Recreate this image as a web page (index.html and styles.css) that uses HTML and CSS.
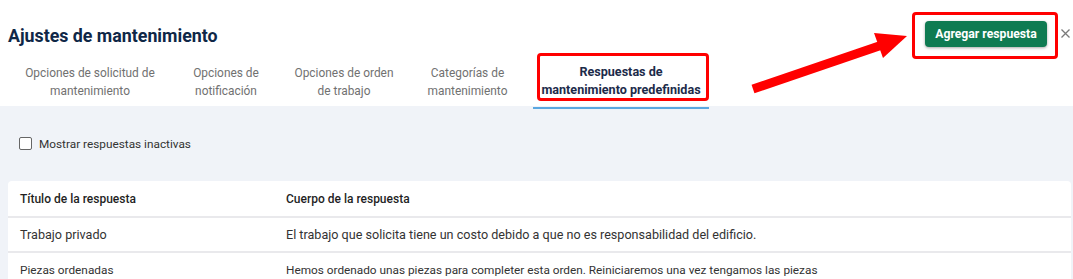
FILE: index.html
```html
<!DOCTYPE html>
<html lang="es">
<head>
    <meta charset="UTF-8">
    <meta name="viewport" content="width=device-width, initial-scale=1.0">
    <title>Ajustes de mantenimiento</title>
    <link rel="stylesheet" href="styles.css">
</head>
<body>
    <div class="header">
        <div class="title-row">
            <h1 class="title">Ajustes de mantenimiento</h1>
            <div class="actions">
                <div class="btn-wrap">
                    <button class="btn-primary">Agregar respuesta</button>
                    <div class="mark mark-btn"></div>
                </div>
                <svg class="close" width="9" height="9" viewBox="0 0 9 9">
                    <path d="M0.5 0.5 L8.5 8.5 M8.5 0.5 L0.5 8.5" stroke="#7a7a7a" stroke-width="1.3"/>
                </svg>
            </div>
        </div>
        <div class="tabs">
            <div class="tab tab-1">Opciones de solicitud de<br>mantenimiento</div>
            <div class="tab tab-2">Opciones de<br>notificación</div>
            <div class="tab tab-3">Opciones de orden<br>de trabajo</div>
            <div class="tab tab-4">Categorías de<br>mantenimiento</div>
            <div class="tab tab-5 active">
                Respuestas de<br>mantenimiento predefinidas
                <div class="mark mark-tab"></div>
            </div>
        </div>
    </div>

    <div class="content">
        <label class="check">
            <span class="box"></span>
            Mostrar respuestas inactivas
        </label>

        <div class="table">
            <div class="row head">
                <div class="col-title">Título de la respuesta</div>
                <div class="col-body">Cuerpo de la respuesta</div>
            </div>
            <div class="row">
                <div class="col-title">Trabajo privado</div>
                <div class="col-body">El trabajo que solicita tiene un costo debido a que no es responsabilidad del edificio.</div>
            </div>
            <div class="row row-sm">
                <div class="col-title">Piezas ordenadas</div>
                <div class="col-body">Hemos ordenado unas piezas para completer esta orden. Reiniciaremos una vez tengamos las piezas</div>
            </div>
        </div>
    </div>

    <!-- flecha de anotación -->
    <svg class="arrow" width="1073" height="120" viewBox="0 0 1073 120">
        <line x1="753" y1="89" x2="882" y2="45" stroke="#f00" stroke-width="9"/>
        <polygon points="907,36 874,33 883,58" fill="#f00"/>
    </svg>
</body>
</html>
```

FILE: styles.css
```css
*{
    margin: 0;
    padding: 0;
    box-sizing: border-box;
}
body{
    width: 1073px;
    height: 279px;
    overflow: hidden;
    position: relative;
    font-family: Roboto, "Liberation Sans", sans-serif;
    background-color: #f0f3f8;
    color: #333;
}
.header{
    background-color: #fff;
    height: 106px;
}
.title-row{
    display: flex;
    justify-content: space-between;
    align-items: center;
    padding: 21px 3px 0 8px;
    height: 47px;
}
.title{
    font-size: 17.8px;
    font-weight: 700;
    color: #0f2747;
    margin-top: 2px;
}
.actions{
    display: flex;
    align-items: center;
    gap: 14px;
}
.btn-wrap{
    position: relative;
}
.btn-primary{
    display: block;
    width: 122px;
    height: 26px;
    border: none;
    border-radius: 4px;
    background-color: #0f7b52;
    color: #fff;
    font-family: Roboto, "Liberation Sans", sans-serif;
    font-size: 12.2px;
    font-weight: 700;
    box-shadow: 0 1px 3px rgba(0,0,0,0.35);
}
.close{
    display: block;
    margin-top: -1px;
}
/* cajas rojas de anotación */
.mark{
    position: absolute;
    border: 3px solid #f00;
    border-radius: 4px;
}
.mark-btn{
    left: -13px;
    top: -9px;
    width: 146px;
    height: 47px;
}
.tabs{
    display: flex;
    padding-left: 14px;
    margin-top: 16px;
}
.tab{
    position: relative;
    text-align: center;
    font-size: 11.9px;
    line-height: 18px;
    color: #717171;
    height: 45px;
    padding-top: 1px;
}
.tab-1{ width: 152px; }
.tab-2{ width: 120px; }
.tab-3{ width: 116px; }
.tab-4{ width: 131px; }
.tab-5{ width: 176px; }
.tab.active{
    color: #1c2b4a;
    font-size: 12.6px;
    font-weight: 700;
    border-bottom: 2px solid #5aa7e0;
    height: 46px;
    padding-top: 0;
}
.mark-tab{
    left: 4px;
    top: -10px;
    width: 172px;
    height: 48px;
}
.content{
    padding: 31px 2px 0 8px;
}
.check{
    display: flex;
    align-items: center;
    gap: 7px;
    padding-left: 11px;
    font-size: 11.8px;
    color: #333;
    height: 13px;
}
.box{
    width: 13px;
    height: 13px;
    border: 1px solid #666;
    border-radius: 2px;
    background-color: #fff;
}
.table{
    margin-top: 31px;
    background-color: #fff;
    border-radius: 4px 4px 0 0;
}
.row{
    display: flex;
    align-items: center;
    height: 35px;
    font-size: 12.6px;
    border-top: 2px solid #e9e9ec;
}
.row.row-sm{
    font-size: 11.8px;
}
.row.head{
    border-top: none;
    height: 35px;
    color: #1f1f1f;
    font-size: 12px;
    font-weight: 500;
}
.col-title{
    width: 278px;
    padding-left: 12px;
}
.col-body{
    flex: 1;
}
.arrow{
    position: absolute;
    left: 0;
    top: 0;
    pointer-events: none;
}
```
